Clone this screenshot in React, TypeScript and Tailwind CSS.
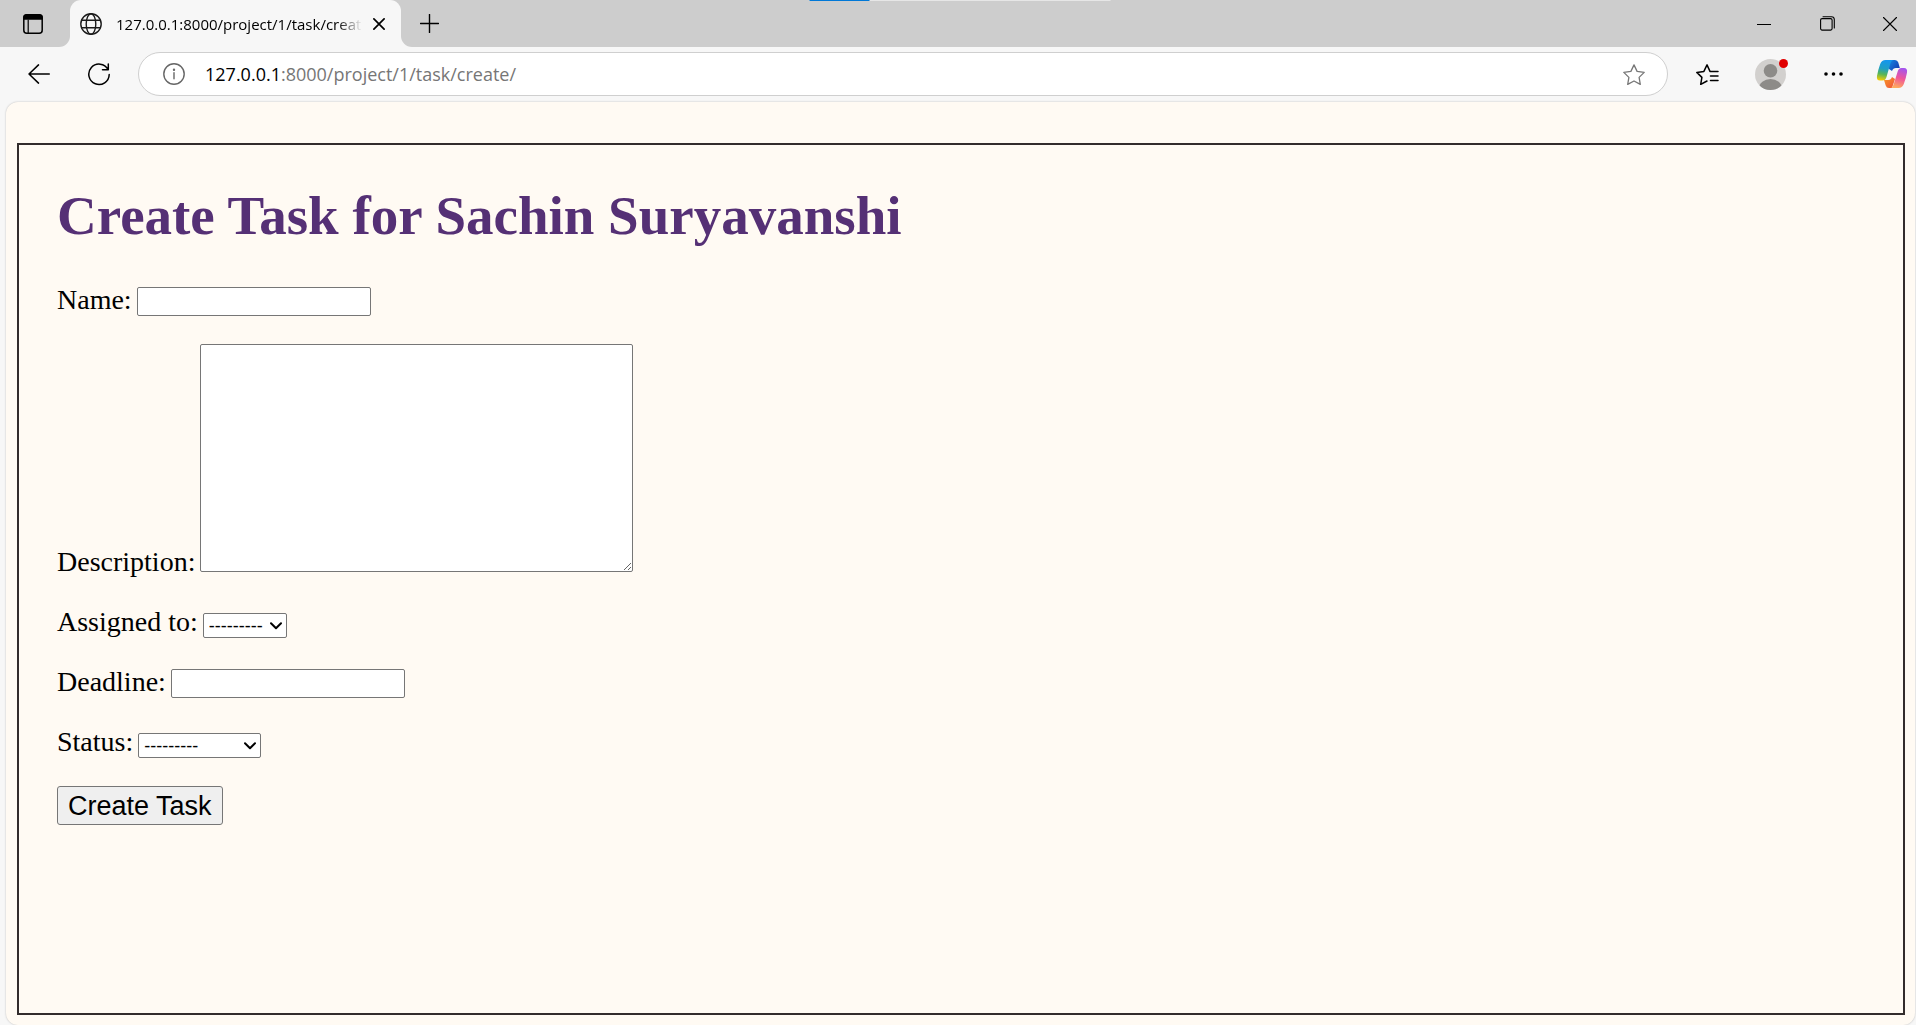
import React from "react";

const icon = {
  fill: "none",
  stroke: "currentColor",
  strokeLinecap: "round" as const,
  strokeLinejoin: "round" as const,
};

function TabActionsIcon() {
  return (
    <svg width="20" height="20" viewBox="0 0 20 20" {...icon} strokeWidth="1.5">
      <rect x="0.8" y="0.8" width="18.4" height="18.4" rx="3" />
      <path d="M1 5V3.5Q1 1 3.5 1h13Q19 1 19 3.5V5z" fill="currentColor" />
      <path d="M5.2 6v13" strokeWidth="1.2" />
    </svg>
  );
}

function GlobeIcon() {
  return (
    <svg width="22" height="22" viewBox="0 0 22 22" {...icon} strokeWidth="1.4">
      <circle cx="11" cy="11" r="10.2" />
      <ellipse cx="11" cy="11" rx="4.8" ry="10.2" />
      <path d="M1.7 7.2h18.6M1.7 14.8h18.6" />
    </svg>
  );
}

function CopilotIcon() {
  return (
    <svg width="32" height="30" viewBox="0 0 32 30">
      <defs>
        <linearGradient id="cpLeft" x1="0.5" y1="0" x2="0.35" y2="1">
          <stop offset="0" stopColor="#1496ee" />
          <stop offset="0.42" stopColor="#1f9fc4" />
          <stop offset="0.7" stopColor="#58b557" />
          <stop offset="1" stopColor="#f3cc05" />
        </linearGradient>
        <linearGradient id="cpRight" x1="0.65" y1="0" x2="0.4" y2="1">
          <stop offset="0" stopColor="#a455ee" />
          <stop offset="0.5" stopColor="#f0569a" />
          <stop offset="1" stopColor="#ffab5c" />
        </linearGradient>
        <linearGradient id="cpTop" x1="0" y1="0" x2="1" y2="0.6">
          <stop offset="0" stopColor="#1596ee" />
          <stop offset="1" stopColor="#1541b5" />
        </linearGradient>
        <linearGradient id="cpBottom" x1="0" y1="0" x2="1" y2="1">
          <stop offset="0" stopColor="#f79b25" />
          <stop offset="1" stopColor="#f0503c" />
        </linearGradient>
      </defs>
      <path d="M10 1h9q2.500 0 3.300 2.500L23.800 9H20q-3 0-4 3L13 10z" fill="url(#cpTop)" />
      <path d="M8 21h4q3 0 4-3l3 2-3 9h-3q-2.500 0-3.300-2.500z" fill="url(#cpBottom)" />
      <path d="M9.500 1H17q-2 1-2.800 4l-3.700 13q-1 3.500-4 3.500H4Q.3 21.500 1 17q1-6 3.200-12Q5.700 1 9.500 1z" fill="url(#cpLeft)" />
      <path d="M22.500 29H15q2-1 2.800-4l3.700-12q1-4 4-4H28q3.700 0 3 4.500-1 6-3.200 11.500Q26.300 29 22.500 29z" fill="url(#cpRight)" />
    </svg>
  );
}

function WindowButtons() {
  return (
    <div className="flex items-center gap-[19px] pr-1 text-black">
      <button aria-label="Minimize" className="flex h-[47px] w-11 items-center justify-center">
        <svg width="14" height="14" viewBox="0 0 14 14" {...icon} strokeWidth="1" strokeLinecap="butt">
          <path d="M0 7.500h14" />
        </svg>
      </button>
      <button aria-label="Restore" className="flex h-[47px] w-11 items-center justify-center">
        <svg width="15" height="15" viewBox="0 0 15 15" {...icon} strokeWidth="1.100">
          <rect x="0.600" y="2.600" width="11.500" height="11.500" rx="1.500" />
          <path d="M3 0.700h8.500q2.800 0 2.800 2.800V12" />
        </svg>
      </button>
      <button aria-label="Close" className="flex h-[47px] w-11 items-center justify-center">
        <svg width="14" height="14" viewBox="0 0 14 14" {...icon} strokeWidth="1.100">
          <path d="M0.500 0.500l13 13M13.500 0.500l-13 13" />
        </svg>
      </button>
    </div>
  );
}

function TabStrip() {
  return (
    <div className="relative flex h-[47px] bg-[#cdcdcd]">
      <div className="absolute left-1/2 top-0 ml-0.5 flex h-px w-[301px] -translate-x-1/2 bg-[#e6e6e6]">
        <div className="w-[60px] bg-[#0078d7]" />
      </div>
      <div className="flex w-[70px] bg-[#f7f7f7]">
        <button aria-label="Tab actions" className="flex w-full items-center justify-center rounded-br-[11px] bg-[#cdcdcd] pr-1 text-black">
          <TabActionsIcon />
        </button>
      </div>
      <div className="bg-[#cdcdcd]">
        <div className="flex h-full w-[331px] items-center rounded-t-[11px] bg-[#f7f7f7] pl-[10px] pr-3 text-[#1b1b1b]">
          <GlobeIcon />
          <span className="ml-[14px] w-[246px] overflow-hidden whitespace-nowrap bg-gradient-to-r from-black from-90% to-transparent bg-clip-text text-[15px] leading-6 text-transparent">
            127.0.0.1:8000/project/1/task/create/
          </span>
          <button aria-label="Close tab" className="ml-auto flex w-5 justify-center text-black">
            <svg width="12" height="12" viewBox="0 0 12 12" {...icon} strokeWidth="1.700">
              <path d="M0.900 0.900l10.200 10.200M11.100 0.900L0.900 11.100" />
            </svg>
          </button>
        </div>
      </div>
      <div className="flex flex-1 bg-[#f7f7f7]">
        <div className="flex flex-1 items-center justify-between rounded-bl-[11px] bg-[#cdcdcd]">
          <button aria-label="New tab" className="ml-[19px] text-black">
            <svg width="19" height="19" viewBox="0 0 19 19" {...icon} strokeWidth="1.400">
              <path d="M9.500 0.500v18M0.500 9.500h18" />
            </svg>
          </button>
          <WindowButtons />
        </div>
      </div>
    </div>
  );
}

function Toolbar() {
  return (
    <div className="flex h-[54px] items-center bg-[#f7f7f7] pl-7 pr-2 text-black">
      <button aria-label="Back" className="w-[22px]">
        <svg width="22" height="20" viewBox="0 0 22 20" {...icon} strokeWidth="1.500">
          <path d="M10.500 0.900L1 10l9.500 9.100M1 10h20.300" />
        </svg>
      </button>
      <button aria-label="Refresh" className="ml-[38px] w-[22px]">
        <svg width="22" height="23" viewBox="0 0 22 23" {...icon} strokeWidth="1.500">
          <path d="M20.300 6.800H14.500M20.300 6.800V1M20 6.500A10.200 10.200 0 1 0 21.200 11.500" />
        </svg>
      </button>
      <div className="ml-7 flex h-11 flex-1 items-center rounded-full border border-[#cfcfcf] bg-white pl-6 pr-[22px]">
        <svg width="22" height="22" viewBox="0 0 22 22" {...icon} strokeWidth="1.400" className="text-[#666]">
          <circle cx="11" cy="11" r="10.200" />
          <path d="M11 9.800v6" />
          <circle cx="11" cy="6.700" r="0.500" fill="currentColor" />
        </svg>
        <div className="ml-5 flex-1 text-lg text-[#767676]">
          <span className="text-black">127.0.0.1</span>:8000/project/1/task/create/
        </div>
        <button aria-label="Add to favorites" className="text-[#777]">
          <svg width="22" height="21" viewBox="0 0 22 21" {...icon} strokeWidth="1.300">
            <path d="M11 0.900l3.100 6.500 7.100 1-5.100 5 1.200 7-6.300-3.400-6.300 3.400 1.200-7-5.100-5 7.100-1z" />
          </svg>
        </button>
      </div>
      <button aria-label="Favorites" className="ml-7">
        <svg width="23" height="21" viewBox="0 0 23 21" {...icon} strokeWidth="1.500">
          <path d="M15.500 7.600L14 7.400 11 0.900 7.900 7.400l-7.100 1 5.100 5-1.200 7L11 17M15.500 7.600H22M14.500 12H22M14.500 16.500H22" />
        </svg>
      </button>
      <button aria-label="Profile" className="relative ml-9">
        <svg width="31" height="31" viewBox="0 0 31 31">
          <clipPath id="avatar">
            <circle cx="15.500" cy="15.500" r="15.500" />
          </clipPath>
          <g clipPath="url(#avatar)">
            <rect width="31" height="31" fill="#d2d0ce" />
            <circle cx="15.500" cy="11.700" r="6.800" fill="#8d8b88" />
            <ellipse cx="15.500" cy="29" rx="11.500" ry="9" fill="#8d8b88" />
          </g>
        </svg>
        <span className="absolute -right-0.5 top-0 size-[9px] rounded-full bg-[#e00000]" />
      </button>
      <button aria-label="Settings and more" className="ml-[38px]">
        <svg width="19" height="4" viewBox="0 0 19 4">
          <circle cx="2" cy="2" r="1.800" />
          <circle cx="9.500" cy="2" r="1.800" />
          <circle cx="17" cy="2" r="1.800" />
        </svg>
      </button>
      <button aria-label="Copilot" className="ml-[33px]">
        <CopilotIcon />
      </button>
    </div>
  );
}

function Row({ id, label, children }: { id: string; label: string; children: React.ReactNode }) {
  return (
    <div className="flex items-end gap-[5px]">
      <label htmlFor={id} className="text-[28px] leading-8">
        {label}
      </label>
      {children}
    </div>
  );
}

function Select({ id, width }: { id: string; width: string }) {
  return (
    <div className={`relative ${width}`}>
      <select
        id={id}
        className="block h-[25px] w-full appearance-none rounded-[2px] border border-[#767676] bg-white pl-[5px] font-['Liberation_Sans',sans-serif] text-lg leading-5"
      >
        <option>---------</option>
      </select>
      <svg
        width="12"
        height="8"
        viewBox="0 0 12 8"
        {...icon}
        strokeWidth="2"
        className="pointer-events-none absolute right-[5px] top-[9px]"
      >
        <path d="M1 1.200l5 5 5-5" />
      </svg>
    </div>
  );
}

function TaskForm() {
  return (
    <form className="flex flex-col items-start gap-7" onSubmit={(e) => e.preventDefault()}>
      <Row id="name" label="Name:">
        <input id="name" type="text" className="h-[29px] w-[234px] rounded-[2px] border border-[#767676] bg-white px-1" />
      </Row>
      <Row id="description" label="Description:">
        <textarea id="description" className="mb-1.5 h-[228px] w-[433px] resize rounded-[2px] border border-[#767676] bg-white p-1" />
      </Row>
      <Row id="assigned" label="Assigned to:">
        <Select id="assigned" width="w-[84px]" />
      </Row>
      <Row id="deadline" label="Deadline:">
        <input id="deadline" type="text" className="h-[29px] w-[234px] rounded-[2px] border border-[#767676] bg-white px-1" />
      </Row>
      <Row id="status" label="Status:">
        <Select id="status" width="w-[123px]" />
      </Row>
      <button className="h-[39px] rounded-[3px] border border-[#767676] bg-[#efefef] px-[10px] font-['Liberation_Sans',sans-serif] text-[27px] leading-8">
        Create Task
      </button>
    </form>
  );
}

export default function App() {
  return (
    <div className="flex min-h-screen flex-col bg-[#f7f7f7] font-['Open_Sans',sans-serif]">
      <TabStrip />
      <Toolbar />
      <main className="ml-1.5 mr-px mt-px flex flex-1 flex-col rounded-xl bg-[#fffaf3] px-[11px] pb-[10px] pr-[10px] pt-[41px] font-['Liberation_Serif',serif] text-black shadow-[0_0_2px_rgba(0,0,0,0.25)]">
        <section className="flex-1 border-2 border-[#322c2c] px-[38px] pt-[39px]">
          <h1 className="mb-9 text-[55px] font-bold leading-16 text-[#553075]">
            Create Task for Sachin Suryavanshi
          </h1>
          <TaskForm />
        </section>
      </main>
    </div>
  );
}
